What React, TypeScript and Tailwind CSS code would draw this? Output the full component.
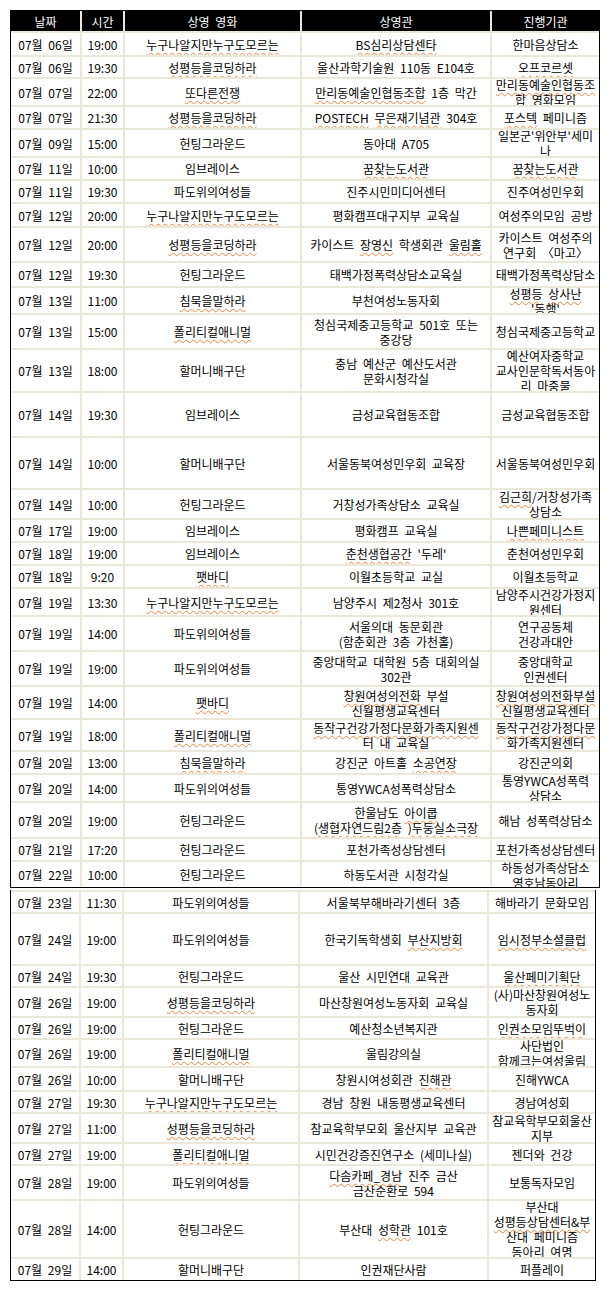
import React from 'react';

// 컬럼 폭 (위 표 / 아래 표는 캡처가 달라 폭이 조금 다름)
const COLS_TOP = 'grid-cols-[69px_41px_175px_188px_107px]';
const COLS_BOTTOM = 'grid-cols-[68px_41px_174px_187px_106px]';

const HEADERS = ['날짜', '시간', '상영 영화', '상영관', '진행기관'];

// ~...~ 는 맞춤법 물결 밑줄, \n 은 줄바꿈
type Row = { h: string; c: [string, string, string, string, string] };

const TOP_ROWS: Row[] = [
  { h: 'h-[22px]', c: ['07월 06일', '19:00', '~누구나알지만누구도모르는~', '~BS심리상담센타~', '한마음상담소'] },
  { h: 'h-[20px]', c: ['07월 06일', '19:30', '~성평등을코딩하라~', '울산과학기술원 110동 E104호', '~오프코르셋~'] },
  { h: 'h-[26px]', c: ['07월 07일', '22:00', '~또다른전쟁~', '~만리동예술인협동조합~ 1층 막간', '~만리동예술인협동조~\n합 영화모임'] },
  { h: 'h-[21px]', c: ['07월 07일', '21:30', '~성평등을코딩하라~', '~POSTECH~ ~무은재기념관~ 304호', '~포스텍~ 페미니즘'] },
  { h: 'h-[26px]', c: ['07월 09일', '15:00', '헌팅그라운드', '동아대 A705', "일본군'위안부'세미\n나"] },
  { h: 'h-[21px]', c: ['07월 11일', '10:00', '임브레이스', '~꿈찾는도서관~', '~꿈찾는도서관~'] },
  { h: 'h-[21px]', c: ['07월 11일', '19:30', '파도위의여성들', '진주시민미디어센터', '진주여성민우회'] },
  { h: 'h-[22px]', c: ['07월 12일', '20:00', '~누구나알지만누구도모르는~', '평화캠프대구지부 교육실', '여성주의모임 공방'] },
  { h: 'h-[33px]', c: ['07월 12일', '20:00', '~성평등을코딩하라~', '카이스트 ~장영신~ 학생회관 ~울림홀~', '카이스트 여성주의\n연구회 〈마고〉'] },
  { h: 'h-[23px]', c: ['07월 12일', '19:30', '헌팅그라운드', '태백가정폭력상담소교육실', '태백가정폭력상담소'] },
  { h: 'h-[25px]', c: ['07월 13일', '11:00', '~침묵을말하라~', '부천여성노동자회', "~성평등~ ~상사난~\n~'동행'~"] },
  { h: 'h-[33px]', c: ['07월 13일', '15:00', '~폴리티컬애니멀~', '청심국제중고등학교 501호 또는\n~중강당~', '청심국제중고등학교'] },
  { h: 'h-[41px]', c: ['07월 13일', '18:00', '할머니배구단', '충남 예산군 예산도서관\n문화시청각실', '예산여자중학교\n교사인문학독서동아\n리 ~마중물~'] },
  { h: 'h-[43px]', c: ['07월 14일', '19:30', '임브레이스', '금성교육협동조합', '금성교육협동조합'] },
  { h: 'h-[50px]', c: ['07월 14일', '10:00', '할머니배구단', '서울동북여성민우회 교육장', '서울동북여성민우회'] },
  { h: 'h-[28px]', c: ['07월 14일', '10:00', '헌팅그라운드', '거창성가족상담소 교육실', '~김근희~/거창성가족\n상담소'] },
  { h: 'h-[21px]', c: ['07월 17일', '19:00', '임브레이스', '평화캠프 교육실', '~나쁜페미니스트~'] },
  { h: 'h-[21px]', c: ['07월 18일', '19:00', '임브레이스', "~춘천생협공간~ '두레'", '춘천여성민우회'] },
  { h: 'h-[21px]', c: ['07월 18일', '9:20', '~팻바디~', '이월초등학교 교실', '이월초등학교'] },
  { h: 'h-[26px]', c: ['07월 19일', '13:30', '~누구나알지만누구도모르는~', '남양주시 제2청사 301호', '남양주시건강가정지\n원센터'] },
  { h: 'h-[33px]', c: ['07월 19일', '14:00', '파도위의여성들', '서울의대 동문회관\n(~함춘회관~ 3층 ~가천홀~)', '연구공동체\n~건강과대안~'] },
  { h: 'h-[33px]', c: ['07월 19일', '19:00', '파도위의여성들', '중앙대학교 대학원 5층 대회의실\n302관', '중앙대학교\n인권센터'] },
  { h: 'h-[31px]', c: ['07월 19일', '14:00', '~팻바디~', '~창원여성의전화~ 부설\n~신월평생교육센터~', '~창원여성의전화부설~\n~신월평생교육센터~'] },
  { h: 'h-[30px]', c: ['07월 19일', '18:00', '~폴리티컬애니멀~', '~동작구건강가정다문화가족지원센~\n터 내 교육실', '~동작구건강가정다문~\n~화가족지원센터~'] },
  { h: 'h-[21px]', c: ['07월 20일', '13:00', '~침묵을말하라~', '강진군 아트홀 ~소공연장~', '강진군의회'] },
  { h: 'h-[26px]', c: ['07월 20일', '14:00', '파도위의여성들', '통영YWCA성폭력상담소', '통영YWCA성폭력\n상담소'] },
  { h: 'h-[34px]', c: ['07월 20일', '19:00', '헌팅그라운드', '한울남도 ~아이쿱~\n~(생협자연드림2층~ ~)두둥실소극장~', '해남 성폭력상담소'] },
  { h: 'h-[21px]', c: ['07월 21일', '17:20', '헌팅그라운드', '포천가족성상담센터', '포천가족성상담센터'] },
  { h: 'h-[25px]', c: ['07월 22일', '10:00', '헌팅그라운드', '하동도서관 시청각실', '하동성가족상담소\n영호남동아리'] },
];

const BOTTOM_ROWS: Row[] = [
  { h: 'h-[20px]', c: ['07월 23일', '11:30', '파도위의여성들', '서울북부해바라기센터 3층', '해바라기 문화모임'] },
  { h: 'h-[50px]', c: ['07월 24일', '19:00', '파도위의여성들', '한국기독학생회 ~부산지방회~', '~임시정부소셜클럽~'] },
  { h: 'h-[20px]', c: ['07월 24일', '19:30', '헌팅그라운드', '울산 시민연대 교육관', '~울산페미기획단~'] },
  { h: 'h-[28px]', c: ['07월 26일', '19:00', '~성평등을코딩하라~', '마산창원여성노동자회 교육실', '(사)마산창원여성노\n동자회'] },
  { h: 'h-[20px]', c: ['07월 26일', '19:00', '헌팅그라운드', '예산청소년복지관', '~인권소모임뚜벅이~'] },
  { h: 'h-[26px]', c: ['07월 26일', '19:00', '~폴리티컬애니멀~', '울림강의실', '사단법인\n~함께크는여성울림~'] },
  { h: 'h-[22px]', c: ['07월 26일', '10:00', '할머니배구단', '창원시여성회관 ~진해관~', '진해YWCA'] },
  { h: 'h-[20px]', c: ['07월 27일', '19:30', '~누구나알지만누구도모르는~', '경남 창원 내동평생교육센터', '경남여성회'] },
  { h: 'h-[28px]', c: ['07월 27일', '11:00', '~성평등을코딩하라~', '참교육학부모회 울산지부 교육관', '참교육학부모회울산\n지부'] },
  { h: 'h-[20px]', c: ['07월 27일', '19:00', '~폴리티컬애니멀~', '시민건강증진연구소 (세미나실)', '젠더와 건강'] },
  { h: 'h-[33px]', c: ['07월 28일', '19:00', '파도위의여성들', '~다솜카페_경남~ 진주 금산\n~금산순환로~ 594', '보통독자모임'] },
  { h: 'h-[56px]', c: ['07월 28일', '14:00', '헌팅그라운드', '부산대 ~성학관~ 101호', '부산대\n~성평등상담센터&부~\n산대 페미니즘\n동아리 여명'] },
  { h: 'h-[21px]', c: ['07월 29일', '14:00', '할머니배구단', '인권재단사람', '퍼플레이'] },
];

const CellText = ({ text }: { text: string }) => (
  <>
    {text.split('\n').map((line, i) => (
      <div key={i}>
        {line.split('~').map((seg, j) =>
          j % 2 === 1 ? (
            <span
              key={j}
              className="underline decoration-wavy decoration-[#f0843c] decoration-1 underline-offset-[2px]"
            >
              {seg}
            </span>
          ) : (
            <React.Fragment key={j}>{seg}</React.Fragment>
          )
        )}
      </div>
    ))}
  </>
);

const ScheduleTable = ({ rows, cols, header, className }: {
  rows: Row[];
  cols: string;
  header?: boolean;
  className: string;
}) => (
  <div className={`flex flex-col gap-[2px] bg-[#ebe8d9] border-black ${className}`}>
    {header && (
      <div className={`grid ${cols} gap-[2px] h-[20px]`}>
        {HEADERS.map((t) => (
          <div key={t} className="bg-black text-white flex items-center justify-center">
            {t}
          </div>
        ))}
      </div>
    )}
    {rows.map((row, i) => (
      <div key={i} className={`grid ${cols} gap-[2px] ${row.h}`}>
        {row.c.map((cell, j) => (
          <div
            key={j}
            className="bg-white flex flex-col items-center justify-center text-center whitespace-pre overflow-hidden"
          >
            <CellText text={cell} />
          </div>
        ))}
      </div>
    ))}
  </div>
);

export default function App() {
  return (
    <div
      className="min-h-[1296px] w-[609px] bg-white pt-[10px] pl-[10px] text-[12px] leading-[15px] text-black [word-spacing:3px]"
      style={{ fontFamily: '"Noto Sans CJK KR", "Noto Sans", sans-serif' }}
    >
      <ScheduleTable rows={TOP_ROWS} cols={COLS_TOP} header className="w-[590px] border" />
      <ScheduleTable rows={BOTTOM_ROWS} cols={COLS_BOTTOM} className="w-[586px] mt-[2px] pt-[2px] border-x border-b" />
    </div>
  );
}
